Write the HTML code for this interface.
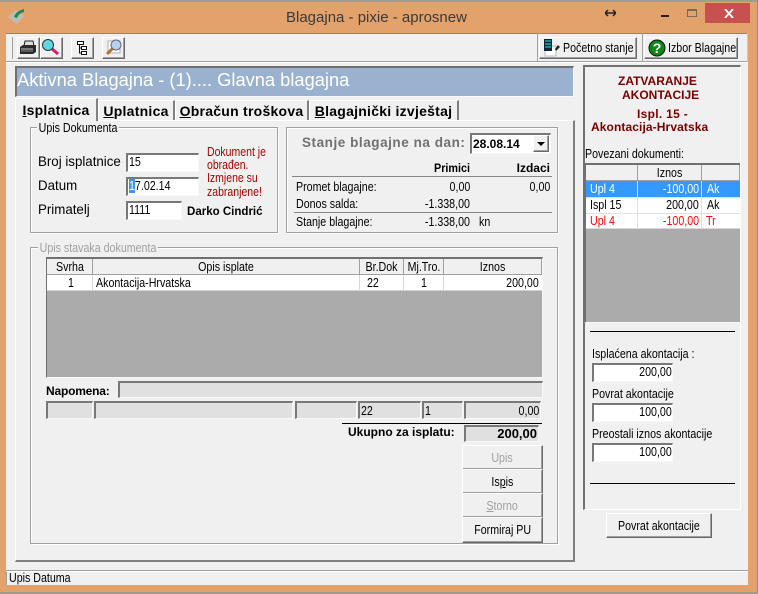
<!DOCTYPE html>
<html><head><meta charset="utf-8"><style>
html,body{margin:0;padding:0}
body{width:758px;height:594px;position:relative;overflow:hidden;background:#E3A26C;font-family:"Liberation Sans",sans-serif;font-size:12px;color:#000}
div,svg{position:absolute;box-sizing:border-box}
.t{position:absolute;white-space:nowrap;line-height:14px;font-size:13px;transform:scaleX(.82);transform-origin:0 50%}
.r{transform-origin:100% 50%}
.b{font-weight:bold;font-size:12px;transform:none}
.s{display:inline-block;font-size:13px;transform:scaleX(.82);transform-origin:50% 50%;white-space:nowrap}
.btn{background:#f0f0f0;border:1px solid;border-color:#fff #696969 #696969 #fff;box-shadow:inset -1px -1px 0 #a0a0a0;text-align:center}
.in{background:#fff;border:2px solid;border-color:#787878 #f8f8f8 #f8f8f8 #787878;border-right-width:1px;border-bottom-width:1px}
.dis{background:#e0e0e0}
.grp{border:1px solid #a0a0a0;box-shadow:1px 1px 0 #fff,inset 1px 1px 0 #fff}
.leg{position:absolute;background:#f0f0f0;white-space:nowrap;line-height:14px;font-size:13px;padding:0 2px;transform:scaleX(.82);transform-origin:0 50%}
.tab{background:#f0f0f0;border-top:1px solid #fff;border-left:1px solid #fff;border-right:2px solid #808080;font-weight:bold;font-size:14px;letter-spacing:.25px;text-align:center;line-height:21px;white-space:nowrap}
.h{background:#f0f0f0;border-right:1px solid #a0a0a0;border-bottom:1px solid #a0a0a0;text-align:center;line-height:15px}
u{text-decoration:underline}
</style></head><body>
<div style="left:0;top:0;width:758px;height:2px;background:#9a9f90"></div>
<div style="left:757px;top:0;width:1px;height:594px;background:#8a8a80"></div>
<div style="left:0;top:592px;width:758px;height:2px;background:#a09a88"></div>
<svg style="left:7px;top:7px" width="18" height="18" viewBox="0 0 18 18"><path d="M1 10L9 3L17 9L10 17Z" fill="#bdbdb5"/><path d="M7 10Q9 4 17 2L17 5Q12 6 10 11Z" fill="#1d8a55"/></svg>
<div class="t" style="left:286px;top:9px;font-size:15px;line-height:17px;color:#3a3a3a;transform:none">Blagajna - pixie - aprosnew</div>
<svg style="left:605px;top:8px" width="11" height="10" viewBox="0 0 11 10"><path d="M0 5H11M3 2L0 5L3 8M8 2L11 5L8 8" stroke="#222" stroke-width="1.5" fill="none"/></svg>
<div style="left:661px;top:15px;width:8px;height:2px;background:#222"></div>
<div style="left:687px;top:9px;width:10px;height:8px;border:1px solid #7a6a58;border-top-width:2px"></div>
<div style="left:705px;top:3px;width:45px;height:20px;background:#C75050"></div>
<svg style="left:724px;top:9px" width="10" height="9" viewBox="0 0 10 9"><path d="M1 0L9 9M9 0L1 9" stroke="#fff" stroke-width="1.8"/></svg>

<div style="left:6px;top:33px;width:742px;height:552px;background:#f0f0f0;border-top:1px solid #a08060"></div>
<div style="left:6px;top:61px;width:742px;height:1px;background:#a0a0a0"></div>
<div style="left:6px;top:62px;width:742px;height:1px;background:#fff"></div>
<div style="left:747px;top:33px;width:1px;height:29px;background:#c8c8c8"></div>
<div style="left:12px;top:37px;width:1px;height:22px;background:#a0a0a0"></div>

<div class="btn" style="left:17px;top:37px;width:23px;height:22px"></div>
<svg style="left:19px;top:40px" width="18" height="16" viewBox="0 0 18 16"><path d="M6 1H14L15 6H5Z" fill="#ddd" stroke="#222"/><path d="M1 7L4 5H17V12L14 14H1Z" fill="#2a2a2a"/><path d="M2 9H14" stroke="#ccc"/><path d="M2 11H14" stroke="#888"/></svg>
<div class="btn" style="left:40px;top:37px;width:23px;height:22px"></div>
<svg style="left:41px;top:38px" width="19" height="18" viewBox="0 0 19 18"><path d="M10 10L17 16" stroke="#e0186c" stroke-width="3"/><circle cx="7" cy="7" r="5.5" fill="#5fd6df" stroke="#333"/></svg>
<div class="btn" style="left:71px;top:37px;width:23px;height:22px"></div>
<svg style="left:75px;top:40px" width="15" height="17" viewBox="0 0 15 17"><path d="M2.5 1.5H8.5V4.5H2.5ZM6.5 6.5H11.5V9.5H6.5ZM6.5 11.5H11.5V14.5H6.5ZM4.5 4.5V13H6.5M4.5 8H6.5" fill="#fff" stroke="#111"/></svg>
<div class="btn" style="left:102px;top:37px;width:23px;height:22px"></div>
<svg style="left:104px;top:38px" width="19" height="19" viewBox="0 0 19 19"><path d="M4 3H16V15H4Z" fill="#fff" stroke="#aaa"/><path d="M9 10L3 16" stroke="#b07828" stroke-width="3"/><circle cx="12" cy="7" r="5" fill="#b8d0f0" stroke="#667"/></svg>

<div style="left:537px;top:33px;width:1px;height:28px;background:#a0a0a0"></div>
<div style="left:642px;top:33px;width:1px;height:28px;background:#a0a0a0"></div>
<div class="btn" style="left:539px;top:37px;width:98px;height:22px"></div>
<svg style="left:543px;top:38px" width="18" height="19" viewBox="0 0 18 19"><path d="M2 8H13V18H2Z" fill="#fff" stroke="#bbb"/><path d="M1 1H9V13H1Z" fill="#123"/><path d="M2 3H8M2 6H8M2 9H8" stroke="#1cc" stroke-width="1.2"/><path d="M12 11L15 7L17 9L13 13Z" fill="#222"/></svg>
<div class="t" style="left:563px;top:41px">Početno stanje</div>
<div class="btn" style="left:644px;top:37px;width:94px;height:22px"></div>
<svg style="left:648px;top:39px" width="18" height="18" viewBox="0 0 18 18"><circle cx="9" cy="9" r="8" fill="#0a8a14" stroke="#111"/><text x="9" y="14" font-family="Liberation Sans" font-weight="bold" font-size="14" fill="#fff" text-anchor="middle">?</text></svg>
<div class="t" style="left:668px;top:41px">Izbor Blagajne</div>

<div style="left:15px;top:66px;width:559px;height:31px;background:#9AB2CF;border:1px solid;border-color:#707070 #f8f8f8 #f8f8f8 #707070;border-width:2px 1px 1px 2px"></div>
<div class="t" style="left:17px;top:68px;font-size:18.3px;line-height:24px;color:#fff;transform:none">Aktivna Blagajna - (1).... Glavna blagajna</div>

<div style="left:15px;top:120px;width:560px;height:442px;background:#f0f0f0;border:1px solid;border-color:#fff #808080 #808080 #fff;border-width:1px 2px 2px 1px"></div>
<div class="tab" style="left:15px;top:98px;width:83px;height:23px;z-index:2;line-height:23px"><u>I</u>splatnica</div>
<div class="tab" style="left:98px;top:100px;width:77px;height:20px;line-height:20px"><u>U</u>platnica</div>
<div class="tab" style="left:175px;top:100px;width:134px;height:20px;line-height:20px"><u>O</u>bračun troškova</div>
<div class="tab" style="left:309px;top:100px;width:150px;height:20px;line-height:20px"><u>B</u>lagajnički izvještaj</div>

<div class="grp" style="left:30px;top:127px;width:248px;height:106px"></div>
<div class="leg" style="left:37px;top:121px">Upis Dokumenta</div>
<div class="t" style="left:38px;top:153px;font-size:14px;line-height:16px;transform:scaleX(.95)">Broj isplatnice</div>
<div class="t" style="left:38px;top:177px;font-size:14px;line-height:16px;transform:scaleX(.95)">Datum</div>
<div class="t" style="left:38px;top:201px;font-size:14px;line-height:16px;transform:scaleX(.95)">Primatelj</div>
<div class="in" style="left:126px;top:153px;width:73px;height:19px"></div>
<div class="t" style="left:129px;top:155px">15</div>
<div class="in" style="left:126px;top:177px;width:73px;height:19px"></div>
<div style="left:129px;top:179px;width:6px;height:14px;background:#3399ff"></div>
<div class="t" style="left:129px;top:179px"><span style="color:#fff">1</span>7.02.14</div>
<div class="in" style="left:126px;top:201px;width:56px;height:19px"></div>
<div class="t" style="left:129px;top:203px">1111</div>
<div class="t b" style="left:187px;top:204px;transform:scaleX(.96)">Darko Cindrić</div>
<div class="t" style="left:207px;top:146px;color:#b00000;font-size:12.5px;line-height:13.2px;transform:scaleX(.84)">Dokument je<br>obrađen.<br>Izmjene su<br>zabranjene!</div>

<div class="grp" style="left:286px;top:127px;width:272px;height:106px"></div>
<div class="t b" style="left:302px;top:136px;font-size:13.5px;color:#707070;letter-spacing:.55px">Stanje blagajne na dan:</div>
<div class="in" style="left:470px;top:133px;width:81px;height:21px"></div>
<div class="t b" style="left:473px;top:137px">28.08.14</div>
<div class="btn" style="left:533px;top:135px;width:16px;height:17px"></div>
<div style="left:537px;top:142px;width:0;height:0;border-left:4px solid transparent;border-right:4px solid transparent;border-top:4px solid #000"></div>
<div class="t b r" style="right:288px;top:161px;transform:scaleX(.9)">Primici</div>
<div class="t b r" style="right:208px;top:161px">Izdaci</div>
<div style="left:292px;top:176px;width:260px;height:1px;background:#888"></div>
<div class="t" style="left:296px;top:180px">Promet blagajne:</div>
<div class="t r" style="right:288px;top:180px">0,00</div>
<div class="t r" style="right:208px;top:180px">0,00</div>
<div class="t" style="left:296px;top:197px">Donos salda:</div>
<div class="t r" style="right:288px;top:197px">-1.338,00</div>
<div style="left:294px;top:212px;width:258px;height:1px;background:#888"></div>
<div class="t" style="left:296px;top:215px">Stanje blagajne:</div>
<div class="t r" style="right:288px;top:215px">-1.338,00</div>
<div class="t" style="left:479px;top:215px">kn</div>

<div class="grp" style="left:30px;top:247px;width:528px;height:297px"></div>
<div class="leg" style="left:38px;top:241px;color:#a0a0a0">Upis stavaka dokumenta</div>
<div style="left:46px;top:257px;width:497px;height:121px;background:#ABABAB;border:2px solid;border-color:#707070 #f8f8f8 #f8f8f8 #707070;border-width:2px 1px 1px 1px"></div>
<div class="h" style="left:47px;top:259px;width:46px;height:16px"><span class="s">Svrha</span></div>
<div class="h" style="left:93px;top:259px;width:267px;height:16px"><span class="s">Opis isplate</span></div>
<div class="h" style="left:360px;top:259px;width:44px;height:16px"><span class="s">Br.Dok</span></div>
<div class="h" style="left:404px;top:259px;width:40px;height:16px"><span class="s">Mj.Tro.</span></div>
<div class="h" style="left:444px;top:259px;width:98px;height:16px"><span class="s">Iznos</span></div>
<div style="left:47px;top:275px;width:495px;height:16px;background:#fff;border-bottom:1px solid #d0d0d0"></div>
<div style="left:92px;top:275px;width:1px;height:16px;background:#d8d8d8"></div>
<div style="left:359px;top:275px;width:1px;height:16px;background:#d8d8d8"></div>
<div style="left:403px;top:275px;width:1px;height:16px;background:#d8d8d8"></div>
<div style="left:443px;top:275px;width:1px;height:16px;background:#d8d8d8"></div>
<div class="t" style="left:68px;top:276px">1</div>
<div class="t" style="left:96px;top:276px">Akontacija-Hrvatska</div>
<div class="t" style="left:367px;top:276px">22</div>
<div class="t" style="left:421px;top:276px">1</div>
<div class="t r" style="right:219px;top:276px">200,00</div>

<div class="t b" style="left:46px;top:384px;letter-spacing:-.2px">Napomena:</div>
<div class="in dis" style="left:118px;top:381px;width:425px;height:17px"></div>
<div class="in dis" style="left:46px;top:401px;width:47px;height:18px"></div>
<div class="in dis" style="left:94px;top:401px;width:199px;height:18px"></div>
<div class="in dis" style="left:295px;top:401px;width:62px;height:18px"></div>
<div class="in dis" style="left:358px;top:401px;width:63px;height:18px"></div>
<div class="in dis" style="left:422px;top:401px;width:41px;height:18px"></div>
<div class="in dis" style="left:464px;top:401px;width:77px;height:18px"></div>
<div class="t" style="left:361px;top:404px">22</div>
<div class="t" style="left:425px;top:404px">1</div>
<div class="t r" style="right:219px;top:404px">0,00</div>
<div style="left:342px;top:423px;width:200px;height:1px;background:#000"></div>
<div class="t b" style="left:348px;top:425px">Ukupno za isplatu:</div>
<div class="in dis" style="left:464px;top:425px;width:75px;height:17px"></div>
<div class="t b r" style="right:221px;top:427px;font-size:13px">200,00</div>
<div class="btn" style="left:462px;top:445px;width:81px;height:25px;color:#a0a0a0;line-height:23px"><span class="s">Upis</span></div>
<div class="btn" style="left:462px;top:469px;width:81px;height:25px;line-height:23px"><span class="s">Is<u>p</u>is</span></div>
<div class="btn" style="left:462px;top:493px;width:81px;height:25px;color:#a0a0a0;line-height:23px"><span class="s"><u>S</u>torno</span></div>
<div class="btn" style="left:462px;top:517px;width:81px;height:26px;line-height:24px"><span class="s">Formiraj PU</span></div>

<div style="left:583px;top:65px;width:158px;height:445px;border:1px solid;border-color:#707070 #fff #fff #707070;border-width:2px 1px 1px 2px"></div>
<div class="t b" style="left:618px;top:74px;color:#7a0000">ZATVARANJE</div>
<div class="t b" style="left:622px;top:88px;color:#7a0000">AKONTACIJE</div>
<div class="t b" style="left:637px;top:107px;color:#7a0000;letter-spacing:.3px">Ispl. 15 -</div>
<div class="t b" style="left:591px;top:120px;color:#7a0000;letter-spacing:.1px">Akontacija-Hrvatska</div>
<div class="t" style="left:585px;top:147px">Povezani dokumenti:</div>
<div style="left:584px;top:163px;width:156px;height:160px;background:#ABABAB;border-top:2px solid #707070;border-left:2px solid #707070;border-bottom:1px solid #f8f8f8"></div>
<div class="h" style="left:586px;top:165px;width:52px;height:16px"></div>
<div class="h" style="left:638px;top:165px;width:64px;height:16px"><span class="s">Iznos</span></div>
<div class="h" style="left:702px;top:165px;width:38px;height:16px"></div>
<div style="left:586px;top:181px;width:154px;height:16px;background:#3399ff"></div>
<div style="left:586px;top:197px;width:154px;height:16px;background:#fff;border-top:1px solid #e0e0e0"></div>
<div style="left:586px;top:213px;width:154px;height:16px;background:#fff;border-top:1px solid #e0e0e0;border-bottom:1px solid #d8d8d8"></div>
<div style="left:637px;top:181px;width:1px;height:48px;background:#e0e0e0"></div>
<div style="left:701px;top:181px;width:1px;height:48px;background:#e0e0e0"></div>
<div class="t" style="left:590px;top:182px;color:#fff">Upl 4</div>
<div class="t r" style="right:59px;top:182px;color:#fff">-100,00</div>
<div class="t" style="left:707px;top:182px;color:#fff">Ak</div>
<div class="t" style="left:590px;top:198px">Ispl 15</div>
<div class="t r" style="right:59px;top:198px">200,00</div>
<div class="t" style="left:707px;top:198px">Ak</div>
<div class="t" style="left:590px;top:214px;color:#f00">Upl 4</div>
<div class="t r" style="right:59px;top:214px;color:#f00">-100,00</div>
<div class="t" style="left:706px;top:214px;color:#f00">Tr</div>
<div style="left:590px;top:331px;width:145px;height:1px;background:#000"></div>
<div style="left:590px;top:483px;width:145px;height:1px;background:#000"></div>
<div class="t" style="left:592px;top:347px">Isplaćena akontacija :</div>
<div class="in" style="left:592px;top:363px;width:81px;height:19px"></div>
<div class="t r" style="right:86px;top:365px">200,00</div>
<div class="t" style="left:592px;top:387px">Povrat akontacije</div>
<div class="in" style="left:592px;top:403px;width:81px;height:19px"></div>
<div class="t r" style="right:86px;top:405px">100,00</div>
<div class="t" style="left:592px;top:427px">Preostali iznos akontacije</div>
<div class="in" style="left:592px;top:443px;width:81px;height:19px"></div>
<div class="t r" style="right:86px;top:445px">100,00</div>
<div class="btn" style="left:606px;top:513px;width:106px;height:25px;line-height:23px"><span class="s">Povrat akontacije</span></div>

<div style="left:6px;top:570px;width:742px;height:1px;background:#a0a0a0"></div>
<div style="left:6px;top:571px;width:742px;height:14px;border-top:1px solid #fff;border-left:1px solid #a0a0a0"></div>
<div class="t" style="left:9px;top:571px">Upis Datuma</div>
</body></html>
